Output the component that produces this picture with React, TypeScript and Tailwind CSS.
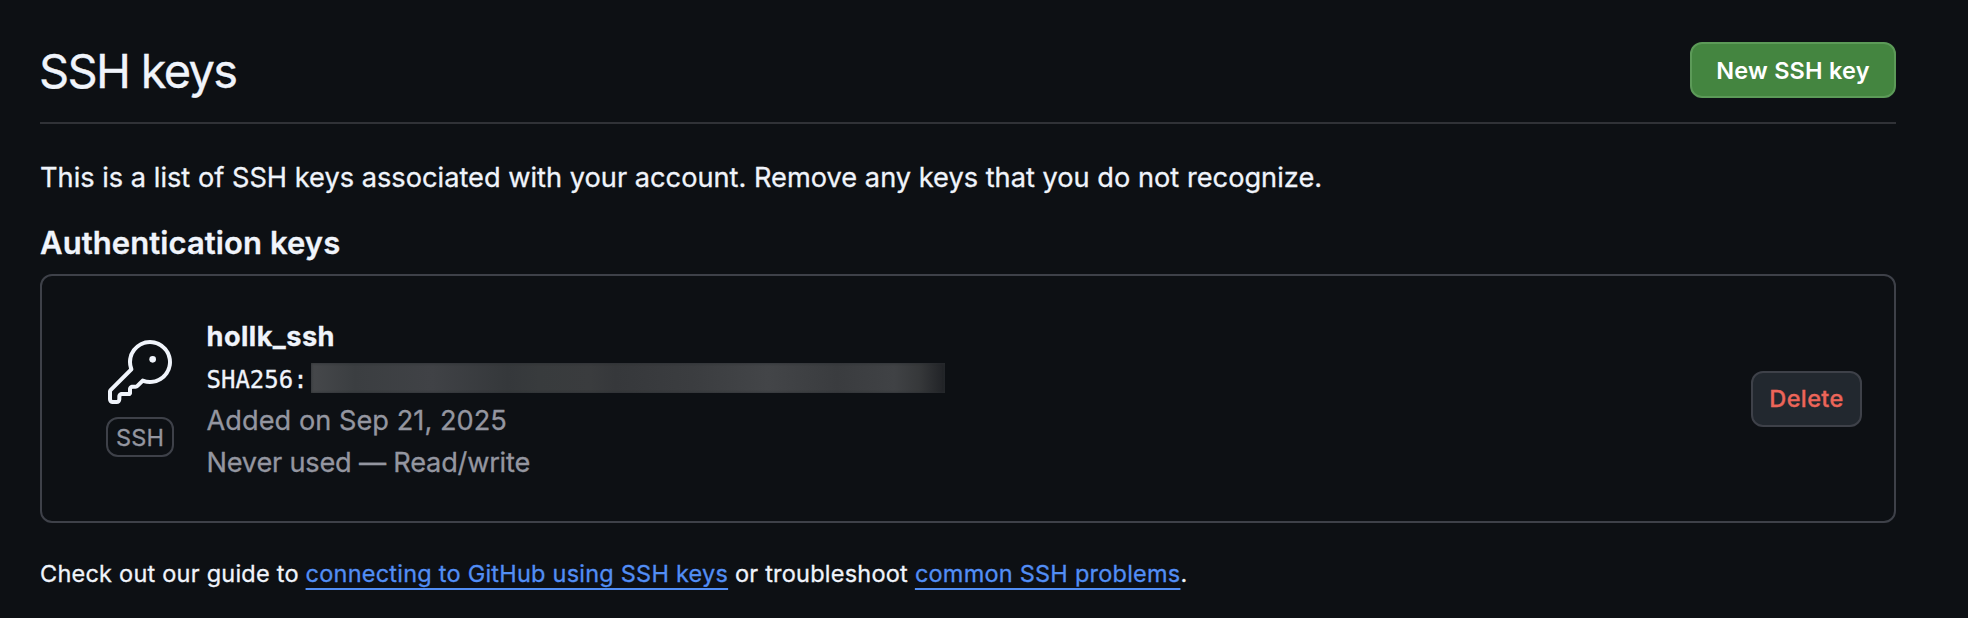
import type { ReactNode } from 'react';

function KeyIcon() {
  return (
    <svg viewBox="0 0 24 24" className="size-16 fill-[#f0f4fb]" aria-hidden="true">
      <path d="M16.75 8.5a1.25 1.25 0 1 0 0-2.5 1.25 1.25 0 0 0 0 2.5Z" />
      <path d="M15.75 0a8.25 8.25 0 1 1-2.541 16.101l-1.636 1.636a1.744 1.744 0 0 1-1.237.513H9.25a.25.25 0 0 0-.25.25v1.448a.876.876 0 0 1-.256.619l-.214.213a.75.75 0 0 1-.545.22H5.25a.25.25 0 0 0-.25.25v1A1.75 1.75 0 0 1 3.25 24h-1.5A1.75 1.75 0 0 1 0 22.25v-2.836c0-.464.185-.908.513-1.236l7.386-7.388A8.249 8.249 0 0 1 15.75 0ZM9 8.25a6.733 6.733 0 0 0 .463 2.462.75.75 0 0 1-.168.804l-7.722 7.721a.25.25 0 0 0-.073.177v2.836c0 .138.112.25.25.25h1.5a.25.25 0 0 0 .25-.25v-1c0-.966.784-1.75 1.75-1.75H7.5v-1c0-.966.784-1.75 1.75-1.75h1.086a.25.25 0 0 0 .177-.073l1.971-1.972a.75.75 0 0 1 .804-.168A6.75 6.75 0 1 0 9 8.25Z" />
    </svg>
  );
}

function TextLink({ children }: { children: ReactNode }) {
  return (
    <a href="#" className="text-[#528ef5] underline decoration-2 underline-offset-[6px] [text-decoration-skip-ink:none]">
      {children}
    </a>
  );
}

function SshKeyCard() {
  return (
    <li className="flex h-[249px] items-center rounded-xl border-2 border-[#3e4149] pt-px pr-8 pl-[62px]">
      <div className="flex w-[72px] flex-col items-center gap-[13px] pb-px">
        <KeyIcon />
        <span className="flex h-10 w-[68px] items-center justify-center rounded-xl border-2 border-[#3e4149] pt-px text-[23.5px] tracking-[0.2px] text-[#9496a0]">
          SSH
        </span>
      </div>
      <div className="ml-[30.5px] flex-1 pt-0.5 text-[27.2px] leading-[42px] text-[#9496a0]">
        <div className="font-bold tracking-[0.45px] text-[#f0f4fb]">hollk_ssh</div>
        <div className="flex h-[42px] items-center gap-[3.5px]">
          <code className="pt-px font-['DejaVu_Sans_Mono',monospace] text-[24px] text-[#f0f4fb]">
            SHA256:
          </code>
          <span className="mb-[3px] h-[30px] w-[634px] bg-[linear-gradient(90deg,#46484b_0%,#3b3e41_7%,#404246_19%,#35383b_31%,#383b3d_36%,#3a3c3e_44%,#36383b_48%,#3b3d40_60%,#434548_72%,#3a3c3f_83%,#404245_92%,#36383a_96%,#202226_100%)] shadow-[inset_0_0_3px_#2a2d30]" />
        </div>
        <div className="tracking-[0.03px]">Added on Sep 21, 2025</div>
        <div className="tracking-[-0.22px]">Never used — Read/write</div>
      </div>
      <button className="flex h-14 w-[111px] items-center justify-center rounded-xl border-2 border-[#3e4149] bg-[#22282f] text-[23.5px] font-medium tracking-[0.4px] text-[#ec6559]">
        Delete
      </button>
    </li>
  );
}

export default function App() {
  return (
    <main className="h-[618px] overflow-hidden bg-[#0d1014] pr-[72px] pl-10 font-['Inter',sans-serif] text-[#f0f4fb] [-webkit-text-stroke:0.3px_currentColor]">
      <header className="flex h-[124px] items-start justify-between border-b-2 border-[#303237] pt-[42px]">
        <h1 className="-ml-px text-[47px] leading-[58px] tracking-[-1.7px]">SSH keys</h1>
        <button className="flex h-14 w-[206px] items-center justify-center rounded-xl border-2 border-[#5c9a58] bg-[#448540] pt-px text-[23.5px] font-semibold tracking-[0.2px] text-white [-webkit-text-stroke:0]">
          New SSH key
        </button>
      </header>
      <p className="mt-[33px] text-[27.2px] leading-[42px] tracking-[0.01px]">
        This is a list of SSH keys associated with your account. Remove any keys that you do not recognize.
      </p>
      <h2 className="mt-5 text-[31px] leading-[48px] font-semibold tracking-[0.08px]">Authentication keys</h2>
      <ul className="mt-[7px]">
        <SshKeyCard />
      </ul>
      <p className="mt-[33px] text-[23.5px] leading-9 tracking-[0.23px]">
        Check out our guide to <TextLink>connecting to GitHub using SSH keys</TextLink> or troubleshoot{' '}
        <TextLink>common SSH problems</TextLink>.
      </p>
    </main>
  );
}
